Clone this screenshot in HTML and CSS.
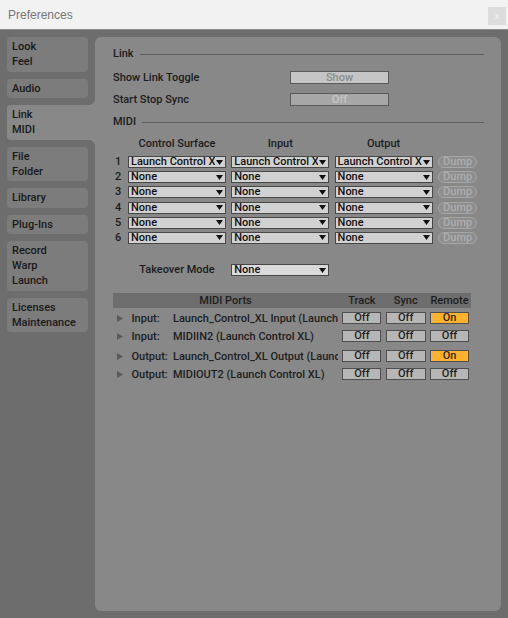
FILE: index.html
```html
<!DOCTYPE html>
<html>
<head>
<meta charset="utf-8">
<title>Preferences</title>
<link rel="stylesheet" href="styles.css">
</head>
<body>
<div class="window">
  <header class="titlebar">
    <span class="title">Preferences</span>
    <span class="close">x</span>
  </header>
  <div class="main">
    <nav class="tabs">
      <div class="tab">Look<br>Feel</div>
      <div class="tab">Audio</div>
      <div class="tab active">Link<br>MIDI</div>
      <div class="tab">File<br>Folder</div>
      <div class="tab">Library</div>
      <div class="tab">Plug-Ins</div>
      <div class="tab">Record<br>Warp<br>Launch</div>
      <div class="tab">Licenses<br>Maintenance</div>
    </nav>
    <section class="panel">
      <div class="section-head"><span>Link</span><span class="rule"></span></div>
      <div class="opt-row first">
        <span>Show Link Toggle</span>
        <span class="toggle show">Show</span>
      </div>
      <div class="opt-row">
        <span>Start Stop Sync</span>
        <span class="toggle off">Off</span>
      </div>
      <div class="section-head midi-head"><span>MIDI</span><span class="rule"></span></div>

      <div class="surf-grid surf-head">
        <span></span><span class="colh">Control Surface</span><span class="colh">Input</span><span class="colh">Output</span><span></span>
      </div>
      <div class="surf-grid surf-rows">
        <span class="num">1</span>
        <div class="select"><span class="val">Launch Control XL</span><svg class="arrow" viewBox="0 0 7 5"><polygon points="0,0 7,0 3.5,5"/></svg></div>
        <div class="select"><span class="val">Launch Control XL</span><svg class="arrow" viewBox="0 0 7 5"><polygon points="0,0 7,0 3.5,5"/></svg></div>
        <div class="select"><span class="val">Launch Control XL</span><svg class="arrow" viewBox="0 0 7 5"><polygon points="0,0 7,0 3.5,5"/></svg></div>
        <span class="dump">Dump</span>

        <span class="num">2</span>
        <div class="select"><span class="val">None</span><svg class="arrow" viewBox="0 0 7 5"><polygon points="0,0 7,0 3.5,5"/></svg></div>
        <div class="select"><span class="val">None</span><svg class="arrow" viewBox="0 0 7 5"><polygon points="0,0 7,0 3.5,5"/></svg></div>
        <div class="select"><span class="val">None</span><svg class="arrow" viewBox="0 0 7 5"><polygon points="0,0 7,0 3.5,5"/></svg></div>
        <span class="dump">Dump</span>

        <span class="num">3</span>
        <div class="select"><span class="val">None</span><svg class="arrow" viewBox="0 0 7 5"><polygon points="0,0 7,0 3.5,5"/></svg></div>
        <div class="select"><span class="val">None</span><svg class="arrow" viewBox="0 0 7 5"><polygon points="0,0 7,0 3.5,5"/></svg></div>
        <div class="select"><span class="val">None</span><svg class="arrow" viewBox="0 0 7 5"><polygon points="0,0 7,0 3.5,5"/></svg></div>
        <span class="dump">Dump</span>

        <span class="num">4</span>
        <div class="select"><span class="val">None</span><svg class="arrow" viewBox="0 0 7 5"><polygon points="0,0 7,0 3.5,5"/></svg></div>
        <div class="select"><span class="val">None</span><svg class="arrow" viewBox="0 0 7 5"><polygon points="0,0 7,0 3.5,5"/></svg></div>
        <div class="select"><span class="val">None</span><svg class="arrow" viewBox="0 0 7 5"><polygon points="0,0 7,0 3.5,5"/></svg></div>
        <span class="dump">Dump</span>

        <span class="num">5</span>
        <div class="select"><span class="val">None</span><svg class="arrow" viewBox="0 0 7 5"><polygon points="0,0 7,0 3.5,5"/></svg></div>
        <div class="select"><span class="val">None</span><svg class="arrow" viewBox="0 0 7 5"><polygon points="0,0 7,0 3.5,5"/></svg></div>
        <div class="select"><span class="val">None</span><svg class="arrow" viewBox="0 0 7 5"><polygon points="0,0 7,0 3.5,5"/></svg></div>
        <span class="dump">Dump</span>

        <span class="num">6</span>
        <div class="select"><span class="val">None</span><svg class="arrow" viewBox="0 0 7 5"><polygon points="0,0 7,0 3.5,5"/></svg></div>
        <div class="select"><span class="val">None</span><svg class="arrow" viewBox="0 0 7 5"><polygon points="0,0 7,0 3.5,5"/></svg></div>
        <div class="select"><span class="val">None</span><svg class="arrow" viewBox="0 0 7 5"><polygon points="0,0 7,0 3.5,5"/></svg></div>
        <span class="dump">Dump</span>
      </div>

      <div class="surf-grid takeover">
        <span></span>
        <span class="colh">Takeover Mode</span>
        <div class="select light"><span class="val">None</span><svg class="arrow" viewBox="0 0 7 5"><polygon points="0,0 7,0 3.5,5"/></svg></div>
      </div>

      <div class="ports">
        <div class="port-grid ports-head">
          <span>MIDI Ports</span><span>Track</span><span>Sync</span><span>Remote</span>
        </div>
        <div class="port-grid port-row">
          <div class="port-name"><svg class="tri" viewBox="0 0 6 7"><polygon points="0,0 6,3.5 0,7"/></svg><span class="plabel">Input:</span><span class="pname">Launch_Control_XL Input (Launch Control XL)</span></div>
          <span class="pbtn">Off</span><span class="pbtn">Off</span><span class="pbtn on">On</span>
        </div>
        <div class="port-grid port-row">
          <div class="port-name"><svg class="tri" viewBox="0 0 6 7"><polygon points="0,0 6,3.5 0,7"/></svg><span class="plabel">Input:</span><span class="pname">MIDIIN2 (Launch Control XL)</span></div>
          <span class="pbtn">Off</span><span class="pbtn">Off</span><span class="pbtn">Off</span>
        </div>
        <div class="port-grid port-row group">
          <div class="port-name"><svg class="tri" viewBox="0 0 6 7"><polygon points="0,0 6,3.5 0,7"/></svg><span class="plabel">Output:</span><span class="pname">Launch_Control_XL Output (Launch Control XL)</span></div>
          <span class="pbtn">Off</span><span class="pbtn">Off</span><span class="pbtn on">On</span>
        </div>
        <div class="port-grid port-row">
          <div class="port-name"><svg class="tri" viewBox="0 0 6 7"><polygon points="0,0 6,3.5 0,7"/></svg><span class="plabel">Output:</span><span class="pname">MIDIOUT2 (Launch Control XL)</span></div>
          <span class="pbtn">Off</span><span class="pbtn">Off</span><span class="pbtn">Off</span>
        </div>
      </div>
    </section>
  </div>
</div>
</body>
</html>
```
FILE: styles.css
```css
* { box-sizing: border-box; }

html, body {
  margin: 0;
  height: 100%;
}

body {
  background: #6d6d6d;
  font-family: Roboto, "Noto Sans", sans-serif;
  font-size: 11px;
  font-weight: 500;
  color: #1c1c1c;
}

.window {
  height: 618px;
  display: flex;
  flex-direction: column;
}

.titlebar {
  height: 30px;
  flex: none;
  background: #f2f2f2;
  border-bottom: 1px solid #8f8f8f;
  display: flex;
  align-items: center;
  justify-content: space-between;
  padding: 0 2px 0 8px;
}

.title {
  font-family: "Liberation Sans", Arial, sans-serif;
  font-weight: 400;
  font-size: 12px;
  color: #767676;
  margin-top: 1px;
}

.close {
  width: 18px;
  height: 18px;
  background: #dcdcdc;
  color: #f5f5f5;
  font-family: "Liberation Sans", Arial, sans-serif;
  font-size: 9px;
  font-weight: 400;
  display: flex;
  align-items: center;
  justify-content: center;
  margin-top: 2px;
}

.main {
  flex: 1;
  display: flex;
  gap: 7px;
  padding: 7px;
}

.tabs {
  width: 81px;
  flex: none;
  display: flex;
  flex-direction: column;
  gap: 7px;
}

.tab {
  background: #7c7c7c;
  border-radius: 4px;
  padding: 2px 5px 2.5px;
  line-height: 15px;
  color: #1a1a1a;
}

.tab.active {
  background: #888888;
  margin-right: -7px;
  border-radius: 4px 0 0 4px;
  position: relative;
}

.tab.active::before,
.tab.active::after {
  content: "";
  position: absolute;
  right: 0;
  width: 6px;
  height: 6px;
}

.tab.active::before {
  top: -6px;
  background: radial-gradient(circle at 0 0, transparent 5.5px, #888888 6.2px);
}

.tab.active::after {
  bottom: -6px;
  background: radial-gradient(circle at 0 100%, transparent 5.5px, #888888 6.2px);
}

.panel {
  flex: 1;
  background: #888888;
  border-radius: 6px;
  padding: 9px 17px 0 18px;
}

.section-head {
  display: flex;
  align-items: center;
  gap: 6px;
  height: 15px;
}

.section-head .rule {
  flex: 1;
  height: 1px;
  background: #5f5f5f;
  margin-top: 1px;
}

.opt-row {
  display: grid;
  grid-template-columns: 177px 99px;
  align-items: center;
  height: 14px;
  margin-top: 8px;
}

.opt-row.first {
  margin-top: 9px;
}

.toggle {
  height: 13px;
  border: 1px solid #5a5a5a;
  display: flex;
  align-items: center;
  justify-content: center;
  line-height: 11px;
}

.toggle.show {
  background: #c5c5c5;
  color: #8c8c8c;
}

.toggle.off {
  background: #a7a7a7;
  color: #c4c4c4;
}

.midi-head {
  margin-top: 8px;
}

.surf-grid {
  display: grid;
  grid-template-columns: 9.7px 98px 98px 98px 39.5px;
  column-gap: 5.3px;
  align-items: center;
}

.surf-head {
  height: 14px;
  margin-top: 8px;
}

.colh {
  text-align: center;
  line-height: 14px;
  white-space: nowrap;
}

.surf-rows {
  margin-top: 5px;
  row-gap: 3.2px;
}

.num {
  padding-left: 2px;
  line-height: 12px;
}

.select {
  height: 12px;
  border: 1px solid #474747;
  background: #d1d1d1;
  display: flex;
  align-items: center;
  padding: 0 2px 0 2px;
  color: #111;
}

.select.light {
  background: #dadada;
}

.select .val {
  flex: 1;
  min-width: 0;
  white-space: nowrap;
  overflow-x: clip;
  overflow-y: visible;
  line-height: 10px;
}

.select .arrow {
  width: 7px;
  height: 5px;
  flex: none;
  fill: #111;
  margin-left: 1px;
}

.dump {
  height: 12px;
  border: 1px solid #a6a6a6;
  border-radius: 6px;
  background: #8e8e8e;
  color: #adadad;
  display: flex;
  align-items: center;
  justify-content: center;
  line-height: 10px;
}

.takeover {
  margin-top: 19.5px;
}

.ports {
  margin-top: 16px;
  width: 358px;
}

.port-grid {
  display: grid;
  grid-template-columns: minmax(0, 1fr) 39px 40px 39px;
  column-gap: 4.3px;
  padding-right: 2px;
  align-items: center;
}

.ports-head {
  height: 15px;
  background: #6e6e6e;
  text-align: center;
  line-height: 15px;
  color: #1e1e1e;
}

.ports-head span {
  white-space: nowrap;
}

.port-row {
  height: 18px;
}

.ports-head + .port-row {
  margin-top: 1px;
}

.port-row.group {
  margin-top: 2px;
}

.port-name {
  display: flex;
  align-items: center;
  white-space: nowrap;
  overflow: hidden;
  min-width: 0;
  padding-left: 4px;
  color: #1e1e1e;
}

.tri {
  width: 6px;
  height: 7px;
  flex: none;
  fill: #5b5b5b;
  margin-right: 8.5px;
}

.plabel {
  min-width: 41.5px;
  flex: none;
  padding-right: 3px;
}

.pname {
  white-space: nowrap;
}

.pbtn {
  height: 12px;
  border: 1px solid #4f4f4f;
  background: #b6b6b6;
  display: flex;
  align-items: center;
  justify-content: center;
  line-height: 10px;
  color: #1e1e1e;
}

.pbtn.on {
  background: #ffb22e;
  color: #2a2000;
}
```
